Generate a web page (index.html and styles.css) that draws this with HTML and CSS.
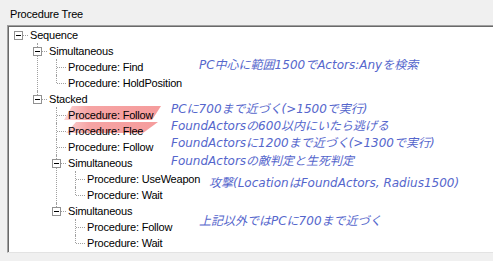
FILE: index.html
```
<!DOCTYPE html>
<html>
<head>
<meta charset="utf-8">
<link rel="stylesheet" href="styles.css">
</head>
<body>
<div class="title">Procedure Tree</div>
<div class="panel">
  <svg class="marks" width="200" height="120" viewBox="0 0 200 120">
    <defs>
      <linearGradient id="pk" x1="0" x2="1" y1="0" y2="0">
        <stop offset="0" stop-color="#fbd3d3"/>
        <stop offset="0.25" stop-color="#f6a4a4"/>
        <stop offset="1" stop-color="#f59c9c"/>
      </linearGradient>
    </defs>
    <polygon points="63,79 152,79 143,93 55,93" fill="url(#pk)"/>
    <polygon points="67,95 149,95 134,106 57,106" fill="url(#pk)"/>
  </svg>
  <div class="tree">
    <div class="node">
      <div class="row"><span class="tog box"></span><span class="label">Sequence</span></div>
      <div class="children">
        <div class="node">
          <div class="row"><span class="tog box"></span><span class="label">Simultaneous</span></div>
          <div class="children">
            <div class="node"><div class="row"><span class="tog leaf"></span><span class="label">Procedure: Find</span></div></div>
            <div class="node"><div class="row"><span class="tog leaf"></span><span class="label">Procedure: HoldPosition</span></div></div>
          </div>
        </div>
        <div class="node">
          <div class="row"><span class="tog box"></span><span class="label">Stacked</span></div>
          <div class="children">
            <div class="node"><div class="row"><span class="tog leaf"></span><span class="label">Procedure: Follow</span></div></div>
            <div class="node"><div class="row"><span class="tog leaf"></span><span class="label">Procedure: Flee</span></div></div>
            <div class="node"><div class="row"><span class="tog leaf"></span><span class="label">Procedure: Follow</span></div></div>
            <div class="node">
              <div class="row"><span class="tog box"></span><span class="label">Simultaneous</span></div>
              <div class="children">
                <div class="node"><div class="row"><span class="tog leaf"></span><span class="label">Procedure: UseWeapon</span></div></div>
                <div class="node"><div class="row"><span class="tog leaf"></span><span class="label">Procedure: Wait</span></div></div>
              </div>
            </div>
            <div class="node">
              <div class="row"><span class="tog box"></span><span class="label">Simultaneous</span></div>
              <div class="children">
                <div class="node"><div class="row"><span class="tog leaf"></span><span class="label">Procedure: Follow</span></div></div>
                <div class="node"><div class="row"><span class="tog leaf"></span><span class="label">Procedure: Wait</span></div></div>
              </div>
            </div>
          </div>
        </div>
      </div>
    </div>
  </div>
  <div class="note n1">PC中心に範囲1500でActors:Anyを検索</div>
  <div class="note n2">PCに700まで近づく(&gt;1500で実行)</div>
  <div class="note n3">FoundActorsの600以内にいたら逃げる</div>
  <div class="note n4">FoundActorsに1200まで近づく(&gt;1300で実行)</div>
  <div class="note n5">FoundActorsの敵判定と生死判定</div>
  <div class="note n6">攻撃(LocationはFoundActors, Radius1500)</div>
  <div class="note n7">上記以外ではPCに700まで近づく</div>
</div>
</body>
</html>
```
FILE: styles.css
```
html, body {
  margin: 0;
  padding: 0;
  background: #f0f0f0;
  overflow: hidden;
  width: 493px;
  height: 261px;
}
body {
  font-family: "Liberation Sans", Arial, sans-serif;
  font-size: 11px;
  letter-spacing: -0.2px;
  color: #000;
}
.title {
  height: 16px;
  line-height: 16px;
  padding: 6px 0 3px 10px;
}
.panel {
  position: relative;
  margin-left: 7px;
  height: 225px;
  background: #fff;
  border-top: 1px solid #a0a0a0;
  border-left: 1px solid #a0a0a0;
  border-bottom: 1px solid #e3e3e3;
  box-shadow: inset 1px 1px 0 #696969;
  padding: 1px 0 0 1px;
  overflow: hidden;
}
.marks {
  position: absolute;
  left: 1px;
  top: 1px;
  z-index: 0;
}
.tree {
  position: relative;
  z-index: 1;
  padding-left: 5px;
}
.node {
  position: relative;
}
.children {
  padding-left: 19px;
}
.children > .node::before {
  content: "";
  position: absolute;
  left: 4px;
  top: 0;
  bottom: 0;
  border-left: 1px dotted #a0a0a0;
}
.children > .node:last-child::before {
  bottom: auto;
  height: 8px;
}
.row {
  display: flex;
  align-items: center;
  height: 16px;
}
.tog {
  position: relative;
  flex: 0 0 16px;
  height: 16px;
}
.tog::after {
  content: "";
  position: absolute;
  top: 8px;
  right: 2px;
  border-top: 1px dotted #a0a0a0;
}
.leaf::after {
  left: 5px;
}
.box::after {
  left: 9px;
}
.box::before {
  content: "";
  position: absolute;
  left: 0;
  top: 4px;
  width: 7px;
  height: 7px;
  border: 1px solid #919191;
  background: #fff linear-gradient(#000, #000) no-repeat 1px 3px / 5px 1px;
  z-index: 2;
}
.label {
  white-space: nowrap;
  line-height: 16px;
}
.note {
  position: absolute;
  z-index: 2;
  white-space: nowrap;
  font-family: "DejaVu Sans", "Noto Sans CJK JP", sans-serif;
  font-style: italic;
  font-size: 12px;
  letter-spacing: 0;
  line-height: 16px;
  color: #5566cc;
}
.n1 { left: 191px; top: 31px; }
.n2 { left: 163px; top: 75px; }
.n3 { left: 163px; top: 92px; }
.n4 { left: 163px; top: 109px; }
.n5 { left: 163px; top: 127px; }
.n6 { left: 201px; top: 149px; }
.n7 { left: 191px; top: 187px; }
```
